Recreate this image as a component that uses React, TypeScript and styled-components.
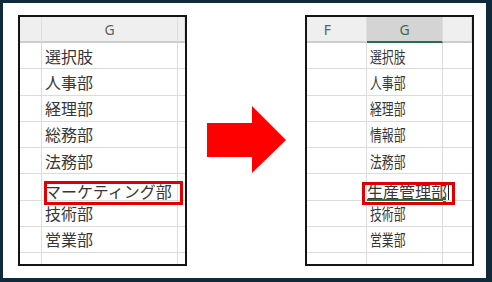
import styled, { createGlobalStyle } from "styled-components";

const GlobalStyle = createGlobalStyle`
  html, body {
    margin: 0;
    padding: 0;
    background: #0f2a3b;
  }
  * {
    box-sizing: border-box;
  }
`;

const Frame = styled.div`
  margin: 3px 6px 4px 3px;
  width: 483px;
  height: 275px;
  background: #ffffff;
  display: flex;
  align-items: flex-start;
  padding: 12px 0 0 15px;
`;

const Sheet = styled.div<{ $cols: string }>`
  position: relative;
  width: 169px;
  height: 251px;
  border: 2px solid #141414;
  overflow: hidden;
  display: grid;
  grid-template-columns: ${(p) => p.$cols};
  grid-auto-rows: 26.25px;
  grid-template-rows: 26px;
  font-family: "Noto Sans CJK JP", "Noto Sans", sans-serif;
`;

const HeadCell = styled.div<{ $active?: boolean; $shift?: number }>`
  display: flex;
  align-items: center;
  justify-content: center;
  padding-right: ${(p) => p.$shift ?? 0}px;
  background: ${(p) => (p.$active ? "#d4d4d4" : "#efefef")};
  border-right: 1px solid #dedede;
  border-bottom: 2px solid ${(p) => (p.$active ? "#217346" : "#cdcdcd")};
  font-family: "Noto Sans", "Liberation Sans", sans-serif;
  font-size: 14px;
  color: ${(p) => (p.$active ? "#3d6b4e" : "#606060")};
  &:last-child {
    border-right: none;
  }
`;

const Cell = styled.div<{ $last?: boolean; $flush?: boolean }>`
  position: relative;
  display: flex;
  align-items: center;
  padding-left: ${(p) => (p.$flush ? 0 : 3)}px;
  border-bottom: 1px solid #dcdcdc;
  border-right: ${(p) => (p.$last ? "none" : "1px solid #dcdcdc")};
  white-space: nowrap;
  overflow: visible;
`;

const Label = styled.span<{ $squeeze?: number; $drop?: boolean }>`
  display: inline-block;
  font-size: 16px;
  line-height: 1;
  color: #363636;
  transform: translateY(${(p) => (p.$drop ? 4 : 0)}px) scaleX(${(p) => p.$squeeze ?? 1});
  transform-origin: left center;
`;

const Highlight = styled.div<{ $left: number; $top: number; $w: number; $h: number }>`
  position: absolute;
  left: ${(p) => p.$left}px;
  top: ${(p) => p.$top}px;
  width: ${(p) => p.$w}px;
  height: ${(p) => p.$h}px;
  border: 3px solid #e00000;
  pointer-events: none;
`;

// editing state of the active cell: green bottom edge, fill handle, caret
const ActiveEdge = styled.div`
  position: absolute;
  left: 0;
  right: -3px;
  bottom: -1px;
  height: 2px;
  background: #217346;
`;

const FillHandle = styled.div`
  position: absolute;
  right: -4px;
  bottom: -2px;
  width: 4px;
  height: 4px;
  background: #217346;
`;

const Caret = styled.div`
  position: absolute;
  left: 81px;
  top: 9px;
  width: 1px;
  height: 17px;
  background: #222;
`;

const ArrowBox = styled.div`
  margin: 91px 19px 0 20px;
  width: 79px;
  height: 67px;
  display: flex;
`;

const before = ["選択肢", "人事部", "経理部", "総務部", "法務部", "マーケティング部", "技術部", "営業部", ""];
const after = ["選択肢", "人事部", "経理部", "情報部", "法務部", "生産管理部", "技術部", "営業部", ""];

function App() {
  return (
    <>
      <GlobalStyle />
      <Frame>
        <Sheet $cols="22px 136px 1fr">
          <HeadCell />
          <HeadCell>G</HeadCell>
          <HeadCell />
          {before.map((name, i) => (
            <>
              <Cell key={`a${i}`} />
              <Cell key={`b${i}`}>
                <Label $drop={i === 5}>{name}</Label>
              </Cell>
              <Cell key={`c${i}`} $last />
            </>
          ))}
          <Highlight $left={24} $top={164} $w={139} $h={24} />
        </Sheet>

        <ArrowBox>
          <svg width="79" height="67" viewBox="0 0 79 67">
            <polygon points="0,17 45,17 45,0 79,34 45,67 45,51 0,51" fill="#ff0000" />
          </svg>
        </ArrowBox>

        <Sheet $cols="60px 76px 1fr">
          <HeadCell $shift={18}>F</HeadCell>
          <HeadCell $active>G</HeadCell>
          <HeadCell />
          {after.map((name, i) => {
            const editing = name === "生産管理部";
            return (
              <>
                <Cell key={`a${i}`} />
                <Cell key={`b${i}`} $flush={editing}>
                  <Label $squeeze={editing ? 1 : 0.74} $drop={editing}>
                    {name}
                  </Label>
                  {editing && (
                    <>
                      <ActiveEdge />
                      <FillHandle />
                      <Caret />
                    </>
                  )}
                </Cell>
                <Cell key={`c${i}`} $last />
              </>
            );
          })}
          <Highlight $left={55} $top={165} $w={93} $h={23} />
        </Sheet>
      </Frame>
    </>
  );
}

export default App;
